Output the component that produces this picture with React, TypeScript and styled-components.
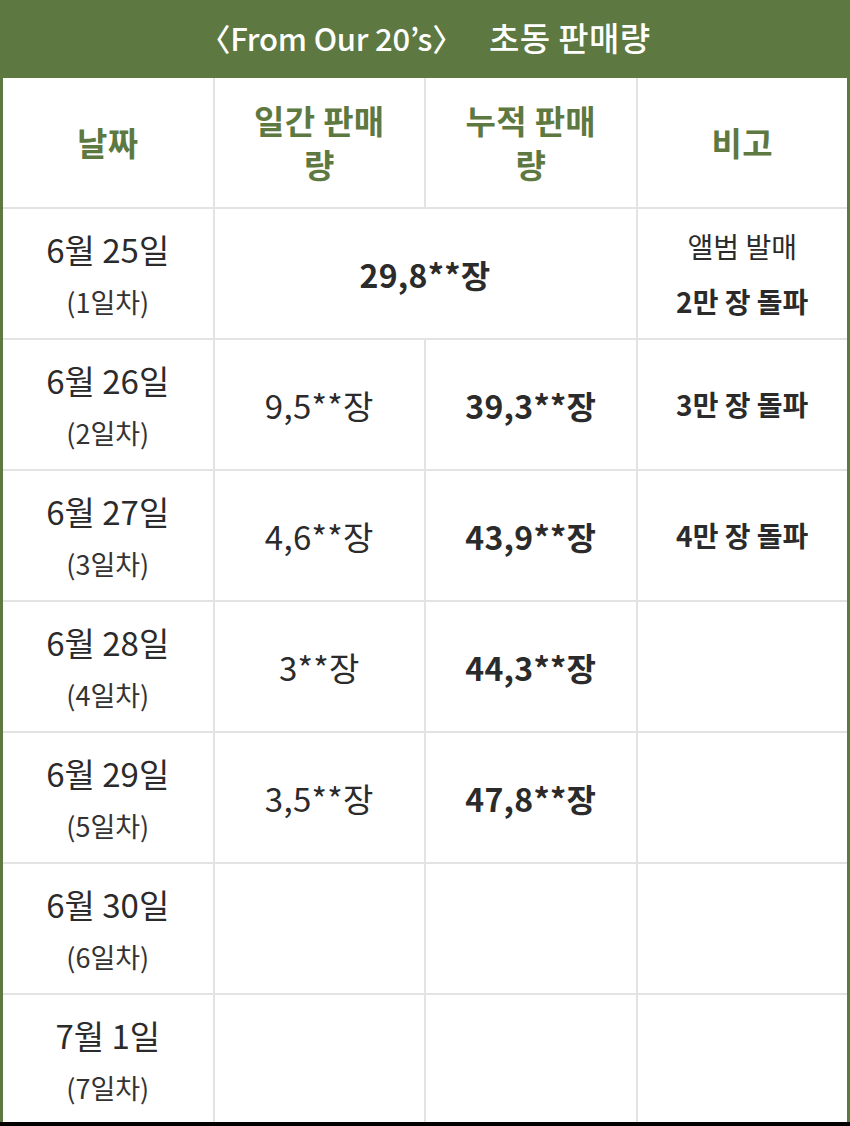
import * as React from 'react';
import styled, { createGlobalStyle } from 'styled-components';

const GlobalStyle = createGlobalStyle`
  html, body {
    margin: 0;
    padding: 0;
    background: #ffffff;
  }
  body {
    font-family: "Noto Sans CJK KR", "Noto Sans", sans-serif;
  }
`;

const GREEN = '#5e7841';

const Page = styled.div`
  width: 850px;
  height: 1126px;
  display: flex;
  flex-direction: column;
  overflow: hidden;
  background: #fff;
`;

const Title = styled.div`
  height: 78px;
  flex: none;
  background: ${GREEN};
  color: #fff;
  display: flex;
  align-items: center;
  justify-content: center;
  font-size: 33px;
  font-weight: 500;
  box-sizing: border-box;
  padding-bottom: 4px;
`;

const Latin = styled.span`
  font-size: 31px;
  letter-spacing: -0.2px;
`;

const Hangul = styled.span`
  letter-spacing: 0.4px;
`;

const Spacer = styled.span`
  display: inline-block;
  width: 26px;
`;

const Table = styled.div`
  flex: 1;
  min-height: 0;
  overflow: hidden;
  display: grid;
  grid-template-columns: repeat(4, 1fr);
  grid-auto-rows: 129px;
  gap: 2px;
  background: #e3e3e3;
  border-left: 3px solid ${GREEN};
  border-right: 3px solid ${GREEN};
`;

const Cell = styled.div<{ $span?: number }>`
  background: #fff;
  grid-column: span ${(p) => p.$span || 1};
  display: flex;
  flex-direction: column;
  align-items: center;
  justify-content: center;
  text-align: center;
  color: #2b2b2b;
`;

const HeadCell = styled(Cell)`
  color: ${GREEN};
  font-size: 33px;
  font-weight: 700;
  line-height: 44px;
  letter-spacing: 0.3px;
  padding-bottom: 2px;
`;

const DateMain = styled.div`
  font-size: 33px;
  line-height: 40px;
  color: #2b2b2b;
`;

const DateSub = styled.div`
  font-size: 27px;
  line-height: 34px;
  margin-top: 16px;
  color: #333;
`;

const Value = styled.div<{ $bold?: boolean }>`
  font-size: ${(p) => (p.$bold ? 32 : 33)}px;
  font-weight: ${(p) => (p.$bold ? 700 : 400)};
  letter-spacing: 0.3px;
  color: #2b2b2b;
`;

const Note = styled.div<{ $bold?: boolean }>`
  font-size: 28px;
  line-height: 55px;
  font-weight: ${(p) => (p.$bold ? 700 : 400)};
  color: #2b2b2b;
`;

const Footer = styled.div`
  height: 4px;
  flex: none;
  background: #000;
`;

interface Row {
  date: string,
  day: string,
  daily?: string,
  total?: string,
  merged?: string,
  notes?: { text: string, bold?: boolean }[],
}

const rows: Row[] = [
  {
    date: '6월 25일',
    day: '(1일차)',
    merged: '29,8**장',
    notes: [{ text: '앨범 발매' }, { text: '2만 장 돌파', bold: true }],
  },
  { date: '6월 26일', day: '(2일차)', daily: '9,5**장', total: '39,3**장', notes: [{ text: '3만 장 돌파', bold: true }] },
  { date: '6월 27일', day: '(3일차)', daily: '4,6**장', total: '43,9**장', notes: [{ text: '4만 장 돌파', bold: true }] },
  { date: '6월 28일', day: '(4일차)', daily: '3**장', total: '44,3**장' },
  { date: '6월 29일', day: '(5일차)', daily: '3,5**장', total: '47,8**장' },
  { date: '6월 30일', day: '(6일차)' },
  { date: '7월 1일', day: '(7일차)' },
];

const App: React.FC = () => {
  return (
    <Page>
      <GlobalStyle />
      <Title>
        <Latin>〈From Our 20’s〉</Latin>
        <Spacer />
        <Hangul>초동 판매량</Hangul>
      </Title>
      <Table>
        <HeadCell>날짜</HeadCell>
        <HeadCell>일간 판매<br />량</HeadCell>
        <HeadCell>누적 판매<br />량</HeadCell>
        <HeadCell>비고</HeadCell>
        {rows.map((row) => (
          <React.Fragment key={row.date}>
            <Cell>
              <DateMain>{row.date}</DateMain>
              <DateSub>{row.day}</DateSub>
            </Cell>
            {row.merged ? (
              <Cell $span={2}>
                <Value $bold>{row.merged}</Value>
              </Cell>
            ) : (
              <>
                <Cell>{row.daily && <Value>{row.daily}</Value>}</Cell>
                <Cell>{row.total && <Value $bold>{row.total}</Value>}</Cell>
              </>
            )}
            <Cell>
              {(row.notes || []).map((n) => (
                <Note key={n.text} $bold={n.bold}>{n.text}</Note>
              ))}
            </Cell>
          </React.Fragment>
        ))}
      </Table>
      <Footer />
    </Page>
  );
};

export default App;
